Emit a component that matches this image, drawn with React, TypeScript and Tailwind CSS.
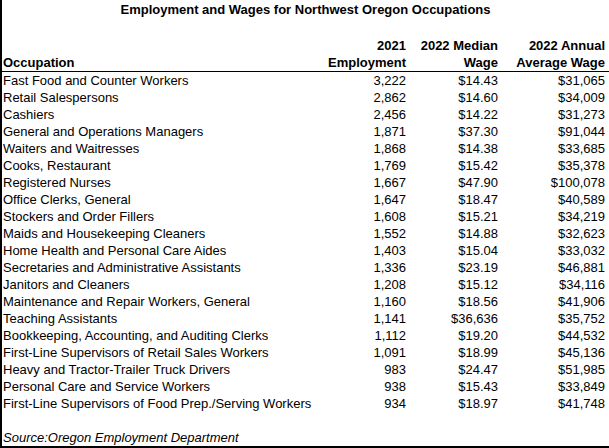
const rows: [string, string, string, string][] = [
  ["Fast Food and Counter Workers", "3,222", "$14.43", "$31,065"],
  ["Retail Salespersons", "2,862", "$14.60", "$34,009"],
  ["Cashiers", "2,456", "$14.22", "$31,273"],
  ["General and Operations Managers", "1,871", "$37.30", "$91,044"],
  ["Waiters and Waitresses", "1,868", "$14.38", "$33,685"],
  ["Cooks, Restaurant", "1,769", "$15.42", "$35,378"],
  ["Registered Nurses", "1,667", "$47.90", "$100,078"],
  ["Office Clerks, General", "1,647", "$18.47", "$40,589"],
  ["Stockers and Order Fillers", "1,608", "$15.21", "$34,219"],
  ["Maids and Housekeeping Cleaners", "1,552", "$14.88", "$32,623"],
  ["Home Health and Personal Care Aides", "1,403", "$15.04", "$33,032"],
  ["Secretaries and Administrative Assistants", "1,336", "$23.19", "$46,881"],
  ["Janitors and Cleaners", "1,208", "$15.12", "$34,116"],
  ["Maintenance and Repair Workers, General", "1,160", "$18.56", "$41,906"],
  ["Teaching Assistants", "1,141", "$36,636", "$35,752"],
  ["Bookkeeping, Accounting, and Auditing Clerks", "1,112", "$19.20", "$44,532"],
  ["First-Line Supervisors of Retail Sales Workers", "1,091", "$18.99", "$45,136"],
  ["Heavy and Tractor-Trailer Truck Drivers", "983", "$24.47", "$51,985"],
  ["Personal Care and Service Workers", "938", "$15.43", "$33,849"],
  ["First-Line Supervisors of Food Prep./Serving Workers", "934", "$18.97", "$41,748"],
];

const cols = "grid grid-cols-[314px_90px_92px_107px] pr-[4px]";

export default function App() {
  return (
    <div className="w-[609px] h-[448px] bg-white text-black font-['Liberation_Sans',Arial,sans-serif] text-[13px] leading-[17px] overflow-hidden">
      <div className="h-[448px] border-l-2 border-b-2 border-black flex flex-col">
        <div className="h-[17px] mt-[1px] text-center font-bold">
          Employment and Wages for Northwest Oregon Occupations
        </div>
        <div className="h-[19px]" />
        <div className="border-b border-black">
          <div className={`${cols} h-[17px] font-bold`}>
            <div />
            <div className="text-right">2021</div>
            <div className="text-right">2022 Median</div>
            <div className="text-right">2022 Annual</div>
          </div>
          <div className={`${cols} h-[17px] font-bold`}>
            <div className="pl-[1px]">Occupation</div>
            <div className="text-right">Employment</div>
            <div className="text-right">Wage</div>
            <div className="text-right">Average Wage</div>
          </div>
        </div>
        {rows.map(([name, emp, median, annual]) => (
          <div key={name} className={`${cols} h-[17px]`}>
            <div className="pl-[1px] whitespace-nowrap">{name}</div>
            <div className="text-right">{emp}</div>
            <div className="text-right">{median}</div>
            <div className="text-right">{annual}</div>
          </div>
        ))}
        <div className="h-[17px]" />
        <div className="h-[17px] pl-[1px] italic">Source:Oregon Employment Department</div>
      </div>
    </div>
  );
}
